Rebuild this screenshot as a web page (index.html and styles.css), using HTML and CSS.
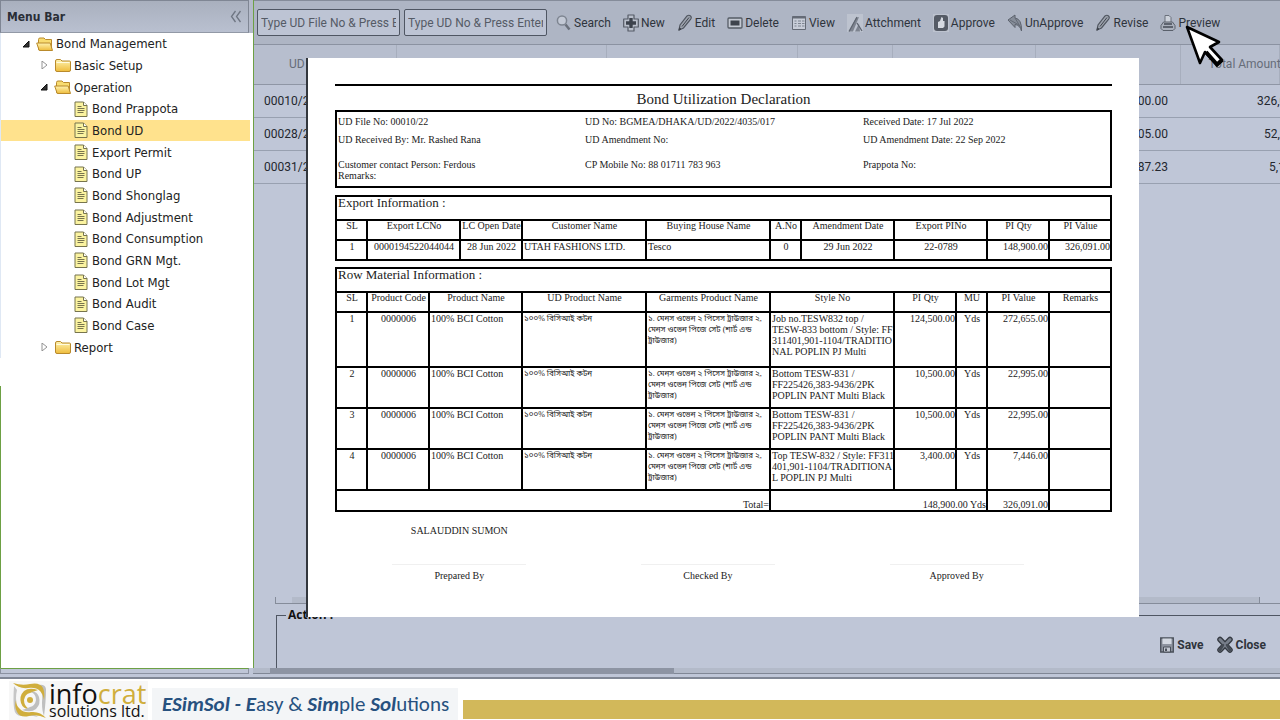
FILE: index.html
```html
<!DOCTYPE html>
<html lang="en">
<head>
<meta charset="utf-8">
<title>Bond UD</title>
<link rel="stylesheet" href="styles.css">
</head>
<body>
<svg class="defs" aria-hidden="true">
  <defs>
    <linearGradient id="gold" x1="0" y1="0" x2="0" y2="1"><stop offset="0" stop-color="#fff3b0"/><stop offset="1" stop-color="#eebc3c"/></linearGradient>
    <symbol id="folder" viewBox="0 0 18 16"><path d="M1.500 4q0-1.500 1.500-1.500h3.500l1.500 1.500h7.500q1 0 1 1v8q0 1.500-1.500 1.500h-12q-1.500 0-1.500-1.500z" fill="url(#gold)" stroke="#b98a2c"/><path d="M2.500 5.500h13" stroke="#fffbe0"/></symbol>
    <symbol id="open" viewBox="0 0 18 16"><path d="M2.500 13.500v-10q0-1.500 1.500-1.500h4l1.500 1.500h6v10z" fill="#f8dc70" stroke="#b98a2c"/><path d="M.7 7h13.500l2.300 7.500H3.200z" fill="url(#gold)" stroke="#b98a2c"/></symbol>
    <symbol id="page" viewBox="0 0 14 16"><path d="M1 1h8.500l3.500 3.500v11H1z" fill="#fbf3a0" stroke="#77744e"/><path d="M9.500 1v3.500H13" fill="#fff" stroke="#77744e"/><path d="M3.500 5.500h4M3.500 7.500h7M3.500 9.500h7M3.500 11.500h6" stroke="#77744e"/></symbol>
    <symbol id="pencil" viewBox="0 0 16 18"><path d="M2 16l1-5L10 2q2-1.500 3.500 0t0 3.500L6.500 14z" fill="#9da3ae" stroke="#4f555f" stroke-width="1.200"/><path d="M5 12.500l7-9M2 16l2-.8-1.400-1.400z" stroke="#3f444d" fill="#3f444d"/></symbol>
  </defs>
</svg>
<div class="app">
  <div class="workspace">
    <aside class="sidebar">
      <div class="side-head"><h2>Menu Bar</h2>
        <button class="collapse" aria-label="Collapse"><svg width="12" height="13" viewBox="0 0 12 13"><path d="M5.500 1L1.500 6.500l4 5.500M10.500 1l-4 5.500 4 5.500" fill="none" stroke="#6f7683" stroke-width="1.300"/></svg></button>
      </div>
      <ul class="tree">
        <li class="l0"><svg class="tw" viewBox="0 0 8 8"><path d="M7 1v6H1z" fill="#333" stroke="#111"/></svg><svg class="fo"><use href="#open"/></svg>Bond Management</li>
        <li class="l1"><svg class="tw" viewBox="0 0 8 8"><path d="M2 0l5 4-5 4z" fill="#fff" stroke="#888" stroke-width=".9"/></svg><svg class="fo"><use href="#folder"/></svg>Basic Setup</li>
        <li class="l1"><svg class="tw" viewBox="0 0 8 8"><path d="M7 1v6H1z" fill="#333" stroke="#111"/></svg><svg class="fo"><use href="#open"/></svg>Operation</li>
        <li class="l2"><svg class="pg"><use href="#page"/></svg>Bond Prappota</li>
        <li class="l2 sel"><svg class="pg"><use href="#page"/></svg>Bond UD</li>
        <li class="l2"><svg class="pg"><use href="#page"/></svg>Export Permit</li>
        <li class="l2"><svg class="pg"><use href="#page"/></svg>Bond UP</li>
        <li class="l2"><svg class="pg"><use href="#page"/></svg>Bond Shonglag</li>
        <li class="l2"><svg class="pg"><use href="#page"/></svg>Bond Adjustment</li>
        <li class="l2"><svg class="pg"><use href="#page"/></svg>Bond Consumption</li>
        <li class="l2"><svg class="pg"><use href="#page"/></svg>Bond GRN Mgt.</li>
        <li class="l2"><svg class="pg"><use href="#page"/></svg>Bond Lot Mgt</li>
        <li class="l2"><svg class="pg"><use href="#page"/></svg>Bond Audit</li>
        <li class="l2"><svg class="pg"><use href="#page"/></svg>Bond Case</li>
        <li class="l1"><svg class="tw" viewBox="0 0 8 8"><path d="M2 0l5 4-5 4z" fill="#fff" stroke="#888" stroke-width=".9"/></svg><svg class="fo"><use href="#folder"/></svg>Report</li>
      </ul>
      <div class="side-rest"></div>
    </aside>
    <main class="main">
      <div class="toolbar">
        <input class="field" type="text" aria-label="UD File No" placeholder="Type UD File No &amp; Press Enter">
        <input class="field" type="text" aria-label="UD No" placeholder="Type UD No &amp; Press Enter">
        <div class="tools">
        <button><svg class="ic" viewBox="0 0 16 18"><circle cx="6" cy="6.500" r="4.600" fill="#c3c9d5" stroke="#7e8591" stroke-width="1.500"/><path d="M9.500 10.500l4 5" stroke="#6a707b" stroke-width="2.500"/></svg>Search</button>
        <button><svg class="ic" viewBox="0 0 16 18"><path d="M5 1h6v4h4.300v8H11v4H5v-4H.700V5H5z" fill="#b9bfcb" stroke="#555b66" stroke-width="1.200" stroke-linejoin="round"/><path d="M8 4v10M3 9h10" stroke="#3c424c" stroke-width="3.400"/></svg>New</button>
        <button><svg class="ic"><use href="#pencil"/></svg>Edit</button>
        <button><svg class="ic" viewBox="0 0 16 18"><rect x="1" y="4" width="14" height="10" rx="1" fill="#c3c8d2" stroke="#565c66" stroke-width="1.300"/><rect x="3.500" y="6.500" width="9" height="5" fill="#3e444d"/></svg>Delete</button>
        <button><svg class="ic" viewBox="0 0 16 18"><path d="M1.500 2.500h13v13h-13z" fill="#c8cdd8" stroke="#656b76"/><path d="M1.500 3.500h13" stroke="#656b76" stroke-width="2"/><path d="M3.500 7h2M7 7h3M11 7h2.500M3.500 9.500h2M7 9.500h3M11 9.500h2.500M3.500 12h2M7 12h3M11 12h2.500" stroke="#7d8490"/></svg>View</button>
        <button><svg class="ic" viewBox="0 0 16 18"><path d="M0 0h16v18H0z" fill="#bdc3cf"/><path d="M2 17.500L9 4l3-1-6 14.500zM8 17.500l4-8 1 8z" fill="#7d838f"/><path d="M10 9l5 8M2 17.500L10 3" stroke="#5f6570" stroke-width="1.300"/></svg>Attchment</button>
        <button><svg class="ic" viewBox="0 0 16 18"><path d="M0 0h16v18H0z" fill="#bdc3cf"/><rect x="1" y="1" width="14" height="16" rx="3" fill="#555b66"/><path d="M5 14V8l2-1 1.500-4 1.500 1v3h1.500v5.500L10 14z" fill="#d5d9e1"/></svg>Approve</button>
        <button><svg class="ic" viewBox="0 0 16 18"><path d="M1 6l7-5v3q7 1 6.500 13-1.500-6-6.500-6.500v3z" fill="#868d99" stroke="#5c626d"/><path d="M3 6l9 5M8 4l6 10" stroke="#656b76"/></svg>UnApprove</button>
        <button><svg class="ic"><use href="#pencil"/></svg>Revise</button>
        <button><svg class="ic" viewBox="0 0 16 18"><path d="M5 9V1.500h4l2 2V9" fill="#cdd2db" stroke="#6b717c"/><path d="M3.500 8h9l2.500 3.500v3l-2 2H3l-2-2v-3z" fill="#aab0bc" stroke="#5a606b"/><path d="M4 10h8M3 13h10" stroke="#454b55" stroke-width="1.600"/></svg>Preview</button>
        </div>
      </div>
      <table class="grid">
        <colgroup><col class="g1"><col class="g2"><col class="g3"><col class="g4"><col class="g5"><col class="g6"><col></colgroup>
        <thead><tr><th>UD File No</th><th></th><th></th><th></th><th></th><th></th><th class="amt">Total Amount</th></tr></thead>
        <tbody>
          <tr><td>00010/22</td><td></td><td></td><td></td><td></td><td class="num">148,900.00</td><td class="a1">326,0</td></tr>
          <tr><td>00028/22</td><td></td><td></td><td></td><td></td><td class="num">605.00</td><td class="a2">52,2</td></tr>
          <tr><td>00031/22</td><td></td><td></td><td></td><td></td><td class="num">87.23</td><td class="a3">5,1</td></tr>
        </tbody>
      </table>
      <div class="inner-scroll"><div></div></div>
      <fieldset class="action"><legend>Action :</legend>
        <div class="action-btns">
          <button><svg width="14" height="16" viewBox="0 0 14 16"><path d="M.700 1h12.600v14H.700z" fill="#8d939f" stroke="#4a505a" stroke-width="1.300"/><path d="M2.500 1.500h9V7h-9z" fill="#d3d8e1"/><path d="M3.500 10h7v5h-7z" fill="#c3c8d2" stroke="#4a505a"/><path d="M5 11.500h2V14H5z" fill="#4a505a"/></svg>Save</button>
          <button><svg width="16" height="17" viewBox="0 0 16 17"><path d="M3 3.500l10 10.500M13 3.500L3 14" stroke="#343941" stroke-width="5.500" stroke-linecap="round"/><path d="M3 3.500l10 10.500M13 3.500L3 14" stroke="#777e8a" stroke-width="3" stroke-linecap="round"/><path d="M6 9l-3 5M10 9l3 5" stroke="#454b54" stroke-width="2.500" stroke-linecap="round"/></svg>Close</button>
        </div>
      </fieldset>
    </main>
  </div>
  <div class="base"><div class="base-left"></div><div class="base-track"><div class="thumb"></div></div></div>
  <footer class="footer">
    <div class="logo">
      <svg width="36" height="37" viewBox="0 0 36 37" fill="none">
        <path d="M13 3q9 1 14 0 6-1 7 4 0 12-2 27-2-5-2-13 1-10-2-14-3-3-15-4z" fill="#bfbfbf"/>
        <path d="M2 4q-1 14 0 22 1 9 9 8 8-1 15 1-5-4-13-4-7 0-8-6Q3 16 5 8z" fill="#c6c6c6"/>
        <path d="M1 1q9 3 17 1 10-2 13 4 2 5 1 12-1-6-4-9-4-4-12-3-9 1-15-5z" fill="#d0ae3c"/>
        <path d="M34 36q-9-4-17-2-9 2-12-4-3-6-1-12 0 6 4 9 4 4 11 3 9-1 15 6z" fill="#d0ae3c"/>
        <path d="M26 8q-9-3-14 1-5 5-3 12 2 6 8 6-5-3-5-9 1-6 6-7 5-2 8-3z" fill="#d0ae3c"/>
        <path d="M10 28q9 3 14-1 5-5 3-12-2-6-8-5 5 2 5 8-1 6-6 7-4 2-8 3z" fill="#bfbfbf"/>
        <circle cx="18" cy="18" r="3" fill="#d0ae3c"/>
      </svg>
      <div class="logo-text"><div class="name">info<span>crat</span></div><div class="sub">solutions ltd.</div></div>
    </div>
    <div class="tagline"><b>ESimSol - E</b>asy &amp; <b>Sim</b>ple <b>Sol</b>utions</div>
    <div class="goldbar"></div>
  </footer>
</div>
<section class="report">
  <h1>Bond Utilization Declaration</h1>
  <div class="info">
    <div>UD File No: 00010/22</div><div>UD No: BGMEA/DHAKA/UD/2022/4035/017</div><div>Received Date: 17 Jul 2022</div>
    <div>UD Received By: Mr. Rashed Rana</div><div>UD Amendment No:</div><div>UD Amendment Date: 22 Sep 2022</div>
    <div>Customer contact Person: Ferdous<br>Remarks:</div><div>CP Mobile No: 88 01711 783 963</div><div>Prappota No:</div>
  </div>
  <table class="doc">
    <colgroup><col class="u1"><col class="u3"><col class="u2"><col class="u4"><col class="u4"><col class="u1"><col class="u3"><col class="u3"><col class="u2"><col class="u2"></colgroup>
    <tbody>
      <tr class="cap"><th colspan="10">Export Information :</th></tr>
      <tr><th>SL</th><th>Export LCNo</th><th>LC Open Date</th><th>Customer Name</th><th>Buying House Name</th><th>A.No</th><th>Amendment Date</th><th>Export PINo</th><th>PI Qty</th><th>PI Value</th></tr>
      <tr><td class="c">1</td><td class="c">0000194522044044</td><td class="c">28 Jun 2022</td><td>UTAH FASHIONS LTD.</td><td>Tesco</td><td class="c">0</td><td class="c">29 Jun 2022</td><td class="c">22-0789</td><td class="r">148,900.00</td><td class="r">326,091.00</td></tr>
    </tbody>
  </table>
  <table class="doc">
    <colgroup><col class="u1"><col class="u2"><col class="u3"><col class="u4"><col class="u4"><col class="u4"><col class="u2"><col class="u1"><col class="u2"><col class="u2"></colgroup>
    <tbody>
      <tr class="cap"><th colspan="10">Row Material Information :</th></tr>
      <tr><th>SL</th><th>Product Code</th><th>Product Name</th><th>UD Product Name</th><th>Garments Product Name</th><th>Style No</th><th>PI Qty</th><th>MU</th><th>PI Value</th><th>Remarks</th></tr>
      <tr class="tall"><td class="c">1</td><td class="c">0000006</td><td>100% BCI Cotton</td><td class="bn" lang="bn">১০০% বিসিআই কটন</td><td class="bn" lang="bn">১. মেনস ওভেন ২ পিসেস ট্রাউজার ২,<br>মেনস ওভেন পিজে সেট (শার্ট এন্ড<br>ট্রাউজার)</td><td>Job no.TESW832 top /<br>TESW-833 bottom / Style: FF<br>311401,901-1104/TRADITIO<br>NAL POPLIN PJ Multi</td><td class="r">124,500.00</td><td class="c">Yds</td><td class="r">272,655.00</td><td></td></tr>
      <tr class="mid"><td class="c">2</td><td class="c">0000006</td><td>100% BCI Cotton</td><td class="bn" lang="bn">১০০% বিসিআই কটন</td><td class="bn" lang="bn">১. মেনস ওভেন ২ পিসেস ট্রাউজার ২,<br>মেনস ওভেন পিজে সেট (শার্ট এন্ড<br>ট্রাউজার)</td><td>Bottom TESW-831 /<br>FF225426,383-9436/2PK<br>POPLIN PANT Multi Black</td><td class="r">10,500.00</td><td class="c">Yds</td><td class="r">22,995.00</td><td></td></tr>
      <tr class="mid"><td class="c">3</td><td class="c">0000006</td><td>100% BCI Cotton</td><td class="bn" lang="bn">১০০% বিসিআই কটন</td><td class="bn" lang="bn">১. মেনস ওভেন ২ পিসেস ট্রাউজার ২,<br>মেনস ওভেন পিজে সেট (শার্ট এন্ড<br>ট্রাউজার)</td><td>Bottom TESW-831 /<br>FF225426,383-9436/2PK<br>POPLIN PANT Multi Black</td><td class="r">10,500.00</td><td class="c">Yds</td><td class="r">22,995.00</td><td></td></tr>
      <tr class="mid"><td class="c">4</td><td class="c">0000006</td><td>100% BCI Cotton</td><td class="bn" lang="bn">১০০% বিসিআই কটন</td><td class="bn" lang="bn">১. মেনস ওভেন ২ পিসেস ট্রাউজার ২,<br>মেনস ওভেন পিজে সেট (শার্ট এন্ড<br>ট্রাউজার)</td><td>Top TESW-832 / Style: FF311<br>401,901-1104/TRADITIONA<br>L POPLIN PJ Multi</td><td class="r">3,400.00</td><td class="c">Yds</td><td class="r">7,446.00</td><td></td></tr>
      <tr class="total"><td class="r" colspan="5">Total=</td><td class="r" colspan="3">148,900.00 Yds</td><td class="r">326,091.00</td><td></td></tr>
    </tbody>
  </table>
  <div class="signs">
    <div><p>SALAUDDIN SUMON</p><span>Prepared By</span></div>
    <div><p></p><span>Checked By</span></div>
    <div><p></p><span>Approved By</span></div>
  </div>
</section>
<svg class="cursor" width="42" height="44" viewBox="0 0 42 44"><path d="M2 2l13 36 5-11 12 13 5-5-12-13 9-5z" fill="#fff" stroke="#000" stroke-width="2.600" stroke-linejoin="round"/><path d="M21 27l11 12.500 5-4.500" fill="none" stroke="#000" stroke-width="4"/></svg>
</body>
</html>
```
FILE: styles.css
```css
* { box-sizing: border-box; }
body { margin: 0; overflow: hidden; background: #fff; font-family: Roboto, "Open Sans", sans-serif; color: #23272e; }
button { border: 0; background: none; padding: 0; font: inherit; color: inherit; display: flex; align-items: center; white-space: nowrap; }
.defs { position: absolute; width: 0; height: 0; }
.app { height: 100vh; display: flex; flex-direction: column; background: #bfc6d7; }
.workspace { flex: 1; min-height: 0; display: flex; }

.sidebar { width: 254px; flex: none; display: flex; flex-direction: column; border-right: 1px solid #6da044; background: #fff; }
.side-head { height: 33px; flex: none; display: flex; align-items: center; justify-content: space-between; padding: 0 6px; margin-right: 4px; border: 1px solid #7f8694; border-bottom: 1px solid #9299a6; background: linear-gradient(#a9b0be, #b9c0d0); box-shadow: 4px 0 0 #b4bac9; }
.side-head h2 { margin: 0; font: bold 12px "DejaVu Sans Condensed", "Noto Sans", sans-serif; color: #2a2e36; }
.tree { list-style: none; margin: 0; padding: 0; height: 325px; display: grid; grid-auto-rows: 1fr; font: 13px "DejaVu Sans Condensed", "Noto Sans", sans-serif; color: #222; border-left: 1px solid #dfe8f4; }
.tree li { display: flex; align-items: center; margin-right: 3px; white-space: nowrap; }
.l0 { padding-left: 21px; }
.l1 { padding-left: 39px; }
.l2 { padding-left: 73px; }
.sel { background: #ffe28d; }
.tw { width: 8px; height: 8px; margin-right: 6px; }
.fo { width: 18px; height: 16px; margin-right: 2px; }
.pg { width: 14px; height: 16px; margin-right: 4px; }
.side-rest { flex: 1; margin-top: 28px; border-left: 1px solid #6da044; }

.main { flex: 1; min-width: 0; display: flex; flex-direction: column; overflow: hidden; }
.toolbar { height: 45px; flex: none; display: flex; align-items: center; gap: 4px; padding-left: 3px; border-top: 1px solid #858c9a; border-bottom: 1px solid #8b92a1; background: #aeb5c4; font-size: 12px; color: #2f343c; }
.field { width: 143px; height: 27px; flex: none; padding: 0 3px; border: 1px solid #4f5663; border-radius: 2px; background: #bdc4d4; font: 12px Roboto, "Open Sans", sans-serif; }
.field::placeholder { color: #555b66; opacity: 1; }
.tools { display: flex; gap: 12px; padding-left: 5px; }
.tools button { gap: 2px; }
.ic { width: 16px; height: 18px; }

.grid { table-layout: fixed; width: 100%; border-collapse: collapse; font-size: 12px; }
.g1 { width: 142px; } .g2 { width: 210px; } .g3 { width: 191px; } .g4 { width: 95px; } .g5 { width: 143px; } .g6 { width: 145px; }
.grid th { height: 39px; padding: 0; background: #b7bece; font-weight: normal; color: #666d79; white-space: nowrap; border-bottom: 1px solid #8f96a5; border-right: 1px solid #a7aebd; padding-left: 35px; text-align: left; }
.grid th.amt { padding-left: 28px; }
.grid td { height: 33px; padding: 0 10px; white-space: nowrap; border-bottom: 1px solid #98a0b0; }
.grid td.num { text-align: right; padding-right: 12px; }
.grid td.a1 { padding: 0 0 0 77px; }
.grid td.a2 { padding: 0 0 0 84px; }
.grid td.a3 { padding: 0 0 0 89px; }

.inner-scroll { margin: auto 0 0 21px; height: 7px; flex: none; border-bottom: 1px solid #858c9a; border-left: 1px solid #858c9a; padding-left: 16px; }
.inner-scroll div { height: 6px; width: 98%; background: #b3bac9; border-right: 1px solid #858c9a; }
.action { margin: 4px 0 0 22px; padding: 0 14px 0 0; height: 60px; flex: none; min-width: 0; border: 1px solid #4f5663; border-width: 1px 0 0 1px; }
.action legend { margin-left: 9px; padding: 0 2px; font: bold 12px/14px "Open Sans", sans-serif; color: #111; }
.action-btns { display: flex; justify-content: flex-end; gap: 13px; padding-top: 14px; font: bold 12px Roboto, "Open Sans", sans-serif; }
.action-btns button { gap: 3px; color: #2f343c; }

.base { height: 11px; flex: none; display: flex; border-bottom: 2px solid #808795; }
.base-left { width: 249px; border: 1px solid #8b92a1; border-top-color: #6da044; margin-bottom: 3px; }
.base-track { flex: 1; margin-left: 4px; margin-bottom: 3px; padding-left: 17px; border-bottom: 1px solid #808795; background: #b3bac9; }
.thumb { width: 40%; height: 6px; background: #8d94a3; }

.footer { height: 41px; flex: none; display: flex; align-items: flex-end; background: #fff; }
.logo { width: 139px; height: 39px; margin-left: 9px; display: flex; align-items: center; gap: 1px; padding-left: 3px; background: #f7f7f7; }
.logo-text { font-family: "Open Sans", sans-serif; color: #111; }
.name { font-size: 27px; line-height: 22px; font-weight: 500; }
.name span { color: #d0ae3c; }
.sub { font-size: 16px; line-height: 13px; font-weight: 500; white-space: nowrap; }
.tagline { margin-left: 4px; width: 306px; height: 32px; padding-left: 10px; background: #f3f5f7; font: 21px/32px Carlito, Lato, sans-serif; color: #27517f; white-space: nowrap; }
.tagline b { font-style: italic; }
.goldbar { flex: 1; height: 19px; margin: 0 0 1px 5px; background: #d2b85a; }

.report { position: absolute; left: 306px; top: 58px; width: 833px; min-height: 559px; padding: 26px 27px 0; background: #fff; border-left: 2px solid #33373d; font: 10px/11px "Liberation Serif", serif; color: #222; }
.report h1 { margin: 0; padding-top: 5px; border-top: 2px solid #000; height: 26px; font-size: 15px; line-height: 16px; font-weight: normal; text-align: center; }
.info { height: 78px; border: 2px solid #000; display: grid; grid-template-columns: 32% 36% 32%; grid-template-rows: 18px 25px 24px; padding: 4px 0 0 1px; margin-bottom: 7px; }
.doc { width: 100%; table-layout: fixed; border-collapse: collapse; margin-bottom: 6px; border: 2px solid #000; }
.u1 { width: 4%; } .u2 { width: 8%; } .u3 { width: 12%; } .u4 { width: 16%; }
.doc th, .doc td { height: 20px; padding: 0 0 0 1px; border: 2px solid #000; font-weight: normal; vertical-align: top; white-space: nowrap; overflow: hidden; }
.doc th { line-height: 9px; }
.doc td { text-align: left; }
.doc .cap th { height: 24px; font-size: 13px; line-height: 12px; text-align: left; }
.doc td.c { text-align: center; }
.doc td.r { text-align: right; }
.doc .tall td { height: 55px; }
.doc .mid td { height: 41px; }
.doc .total td { height: 21px; vertical-align: bottom; }
.doc td.bn { font-family: "Liberation Serif", "Noto Sans Bengali", sans-serif; font-size: 8px; line-height: 11px; }
.signs { display: grid; grid-template-columns: 32% 32% 32%; text-align: center; padding-top: 7px; }
.signs p { margin: 0; height: 39px; line-height: 11px; }
.signs span { display: block; width: 134px; margin: 0 auto; padding-top: 5px; border-top: 1px solid #f0f0f0; }
.cursor { position: absolute; left: 1185px; top: 25px; }
```
